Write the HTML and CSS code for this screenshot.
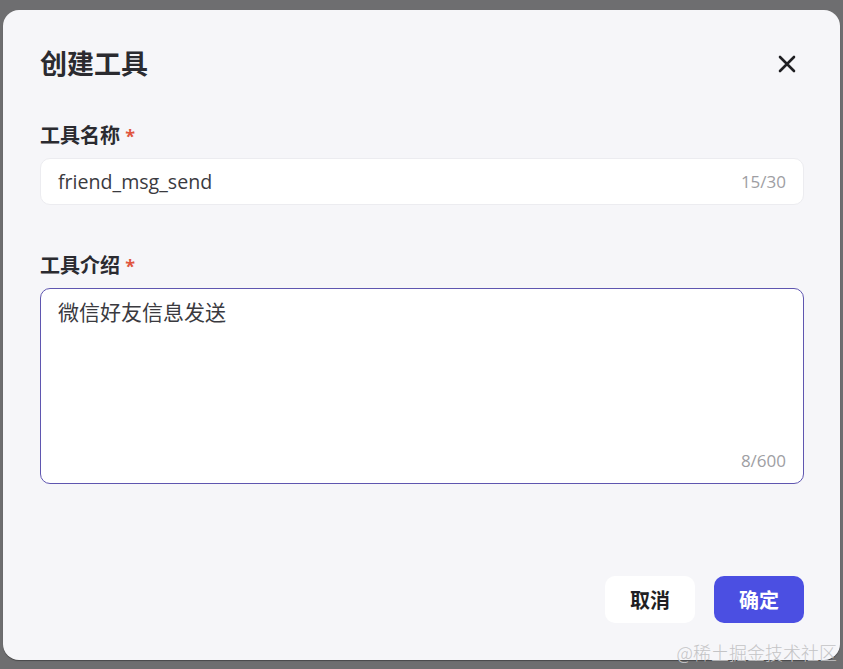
FILE: index.html
```html
<!DOCTYPE html>
<html lang="zh">
<head>
<meta charset="utf-8">
<link rel="stylesheet" href="styles.css">
</head>
<body>
<div class="dialog">
  <div class="header">
    <h1 class="title">创建工具</h1>
    <button class="close" aria-label="关闭">
      <svg width="18" height="18" viewBox="0 0 18 18"><path d="M2 2L16 16M16 2L2 16" stroke="#1f1f23" stroke-width="2.6" stroke-linecap="round"/></svg>
    </button>
  </div>
  <div class="field first">
    <label class="label">工具名称 <span class="req">*</span></label>
    <div class="input">
      <span class="value">friend_msg_send</span>
      <span class="count">15/30</span>
    </div>
  </div>
  <div class="field second">
    <label class="label">工具介绍 <span class="req">*</span></label>
    <div class="textarea">
      <span class="value">微信好友信息发送</span>
      <span class="count">8/600</span>
    </div>
  </div>
  <div class="footer">
    <button class="btn cancel">取消</button>
    <button class="btn ok">确定</button>
  </div>
</div>
<div class="watermark">@稀土掘金技术社区</div>
</body>
</html>
```

FILE: styles.css
```css
* { box-sizing: border-box; }
html, body { margin: 0; padding: 0; }
body {
  width: 843px;
  height: 669px;
  background: #6e6e70;
  font-family: "Open Sans", "Noto Sans CJK SC", sans-serif;
  padding: 10px 3px 9px 3px;
  position: relative;
  overflow: hidden;
}
.dialog {
  width: 837px;
  height: 650px;
  background: #f6f6f9;
  border-radius: 16px;
  padding: 0 36px 37px 37px;
  display: flex;
  flex-direction: column;
  box-shadow: 0 1px 1px rgba(0,0,0,0.35);
}
.header {
  display: flex;
  align-items: center;
  justify-content: space-between;
  padding-top: 35px;
}
.title {
  margin: 0;
  font-size: 27px;
  line-height: 38px;
  font-weight: 700;
  color: #2b2b30;
}
.close {
  border: 0;
  background: none;
  padding: 0;
  margin-right: 8px;
  width: 18px;
  height: 18px;
  display: flex;
}
.field { display: flex; flex-direction: column; }
.field.first { margin-top: 39px; }
.field.second { margin-top: 47px; }
.label {
  font-size: 20px;
  line-height: 28px;
  font-weight: 700;
  color: #2b2b30;
  margin-bottom: 8px;
}
.req { color: #e0553e; font-size: 18px; }
.input {
  height: 47px;
  background: #fff;
  border: 1px solid #ececf0;
  border-radius: 10px;
  display: flex;
  align-items: center;
  justify-content: space-between;
  padding: 0 17px 0 17px;
}
.value {
  font-size: 21px;
  color: #3a3a3f;
}
.input .value { font-size: 19.6px; }
.count {
  font-size: 17px;
  color: #9e9ea3;
}
.textarea {
  height: 196px;
  background: #fff;
  border: 1px solid #5f56b0;
  border-radius: 10px;
  display: flex;
  flex-direction: column;
  justify-content: space-between;
  padding: 9px 17px 11px 17px;
}
.textarea .value { line-height: 28px; }
.textarea .count { align-self: flex-end; }
.footer {
  margin-top: auto;
  display: flex;
  justify-content: flex-end;
  gap: 19px;
}
.btn {
  width: 90px;
  height: 47px;
  border: 0;
  border-radius: 10px;
  font-family: "Open Sans", "Noto Sans CJK SC", sans-serif;
  font-size: 20px;
  font-weight: 700;
}
.cancel { background: #fff; color: #1f1f23; }
.ok { background: #4b4fe2; color: #fff; }
.watermark {
  position: absolute;
  right: 6px;
  bottom: 6px;
  font-family: "Noto Sans CJK SC", sans-serif;
  font-size: 18px;
  line-height: 22px;
  color: #c4c4c6;
  font-weight: 300;
}
```
